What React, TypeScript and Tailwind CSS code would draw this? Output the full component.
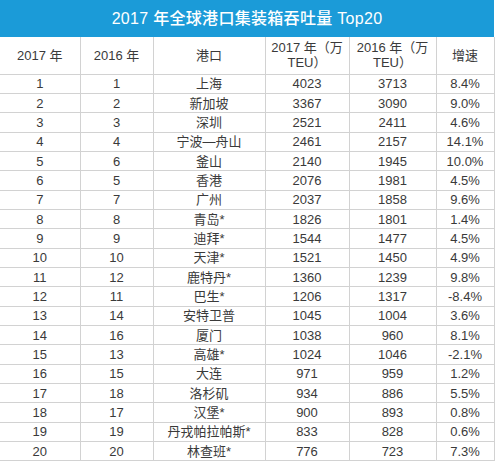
import React from "react";

const rows: [number, number, string, number, number, string][] = [
  [1, 1, "上海", 4023, 3713, "8.4%"],
  [2, 2, "新加坡", 3367, 3090, "9.0%"],
  [3, 3, "深圳", 2521, 2411, "4.6%"],
  [4, 4, "宁波—舟山", 2461, 2157, "14.1%"],
  [5, 6, "釜山", 2140, 1945, "10.0%"],
  [6, 5, "香港", 2076, 1981, "4.5%"],
  [7, 7, "广州", 2037, 1858, "9.6%"],
  [8, 8, "青岛*", 1826, 1801, "1.4%"],
  [9, 9, "迪拜*", 1544, 1477, "4.5%"],
  [10, 10, "天津*", 1521, 1450, "4.9%"],
  [11, 12, "鹿特丹*", 1360, 1239, "9.8%"],
  [12, 11, "巴生*", 1206, 1317, "-8.4%"],
  [13, 14, "安特卫普", 1045, 1004, "3.6%"],
  [14, 16, "厦门", 1038, 960, "8.1%"],
  [15, 13, "高雄*", 1024, 1046, "-2.1%"],
  [16, 15, "大连", 971, 959, "1.2%"],
  [17, 18, "洛杉矶", 934, 886, "5.5%"],
  [18, 17, "汉堡*", 900, 893, "0.8%"],
  [19, 19, "丹戎帕拉帕斯*", 833, 828, "0.6%"],
  [20, 20, "林查班*", 776, 723, "7.3%"],
];

const cell = "border border-[#d2d2d2] text-center align-middle p-0";

export default function App() {
  return (
    <div
      className="w-[499px] h-[461px] overflow-hidden bg-white text-[#3a3a3a]"
      style={{ fontFamily: '"Liberation Sans", "Noto Sans CJK SC", sans-serif' }}
    >
      <div className="w-[494px] h-[37px] bg-[#1b9bd8] flex items-center justify-center text-white text-[16px] font-medium tracking-[0.3px]">
        2017 年全球港口集装箱吞吐量 Top20
      </div>
      <table className="w-[494px] table-fixed border-collapse text-[13px] leading-[15px]">
        <colgroup>
          <col className="w-[80px]" />
          <col className="w-[73px]" />
          <col className="w-[112px]" />
          <col className="w-[84px]" />
          <col className="w-[87px]" />
          <col className="w-[58px]" />
        </colgroup>
        <thead>
          <tr className="h-[37px]">
            <th className={cell + " border-l-0 border-t-0 font-normal"}>2017 年</th>
            <th className={cell + " border-t-0 font-normal"}>2016 年</th>
            <th className={cell + " border-t-0 font-normal"}>港口</th>
            <th className={cell + " border-t-0 font-normal"}>
              2017 年（万
              <br />
              TEU）
            </th>
            <th className={cell + " border-t-0 font-normal"}>
              2016 年（万
              <br />
              TEU）
            </th>
            <th className={cell + " border-t-0 font-normal"}>增速</th>
          </tr>
        </thead>
        <tbody>
          {rows.map((r, i) => (
            <tr key={i} className="h-[19.35px]">
              <td className={cell + " border-l-0"}>{r[0]}</td>
              <td className={cell}>{r[1]}</td>
              <td className={cell + " whitespace-nowrap"}>{r[2]}</td>
              <td className={cell}>{r[3]}</td>
              <td className={cell}>{r[4]}</td>
              <td className={cell}>{r[5]}</td>
            </tr>
          ))}
        </tbody>
      </table>
    </div>
  );
}
